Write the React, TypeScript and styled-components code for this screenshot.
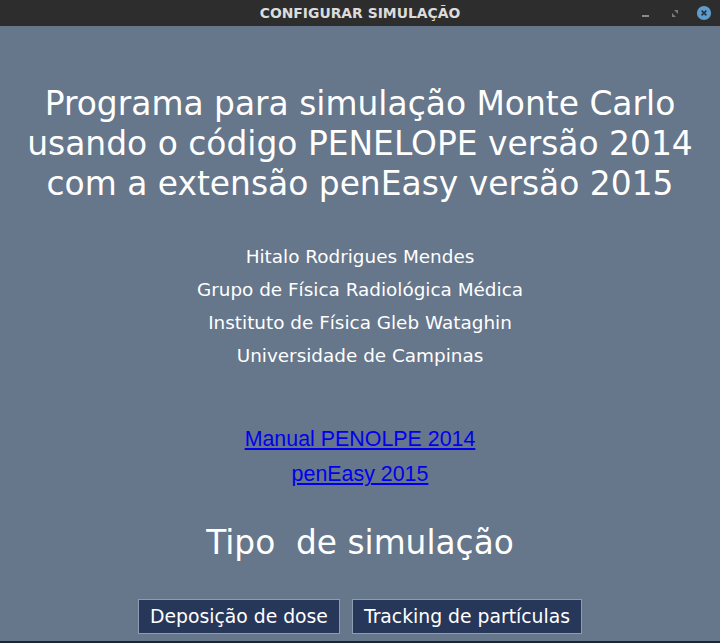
import React from "react";
import styled, { createGlobalStyle } from "styled-components";

const Global = createGlobalStyle`
  html, body { margin: 0; padding: 0; background: #66768b; }
  #root { height: 643px; }
`;

const Window = styled.div`
  width: 720px;
  height: 643px;
  display: flex;
  flex-direction: column;
  background: #66768b;
  font-family: "DejaVu Sans", sans-serif;
  color: #ffffff;
  overflow: hidden;
  border-bottom: 2px solid #1e2430;
  box-sizing: border-box;
`;

const TitleBar = styled.div`
  height: 26px;
  flex: none;
  background: #2d2d2d;
  position: relative;
  display: flex;
  align-items: center;
  justify-content: center;
`;

const TitleText = styled.span`
  font-family: "DejaVu Sans", sans-serif;
  font-weight: bold;
  font-size: 13.9px;
  color: #dcdcdc;
`;

const Controls = styled.div`
  position: absolute;
  right: 8px;
  top: 0;
  height: 26px;
  display: flex;
  align-items: center;
  gap: 13px;
`;

const Ctrl = styled.div`
  width: 16px;
  height: 16px;
  display: flex;
  align-items: center;
  justify-content: center;
`;

const Content = styled.div`
  flex: 1;
  display: flex;
  flex-direction: column;
  align-items: center;
  padding-top: 58px;
`;

const Heading = styled.h1`
  margin: 0;
  font-weight: normal;
  font-size: 32.9px;
  line-height: 40px;
  text-align: center;
`;

const Authors = styled.div`
  margin-top: 36px;
  display: flex;
  flex-direction: column;
  align-items: center;
  font-size: 18.4px;
  line-height: 33px;
`;

const Links = styled.div`
  margin-top: 50px;
  display: flex;
  flex-direction: column;
  align-items: center;
  font-family: "Liberation Sans", Arial, sans-serif;
  font-size: 21.4px;
  line-height: 35px;
`;

const Link = styled.a`
  color: #0000ee;
  text-decoration: underline;
`;

const SubHeading = styled.h2`
  margin: 31px 0 0;
  font-weight: normal;
  font-size: 32.8px;
  line-height: 40px;
  white-space: pre;
`;

const Buttons = styled.div`
  margin-top: 36px;
  display: flex;
  gap: 12px;
`;

const Button = styled.button`
  height: 35px;
  padding: 0 11px;
  background: #27375a;
  border: 1px solid #8d9cb0;
  color: #ffffff;
  font-family: "DejaVu Sans", sans-serif;
  font-size: 18.8px;
  cursor: pointer;
`;

export default function App() {
  return (
    <>
      <Global />
      <Window>
        <TitleBar>
          <TitleText>CONFIGURAR SIMULAÇÃO</TitleText>
          <Controls>
            <Ctrl>
              <svg width="16" height="16" viewBox="0 0 16 16">
                <rect x="4" y="10" width="7" height="2" fill="#8a8a8a" />
              </svg>
            </Ctrl>
            <Ctrl>
              <svg width="16" height="16" viewBox="0 0 16 16">
                <path d="M5 8 L5 12 L9 12 Z" fill="#7a7a7a" />
                <path d="M11 9 L11 5 L7 5 Z" fill="#7a7a7a" />
              </svg>
            </Ctrl>
            <Ctrl>
              <svg width="18" height="18" viewBox="0 0 18 18">
                <circle cx="9" cy="9" r="8" fill="#5e9ccc" />
                <path d="M6.3 6.3 L11.7 11.7 M11.7 6.3 L6.3 11.7" stroke="#2b3440" strokeWidth="1.8" />
              </svg>
            </Ctrl>
          </Controls>
        </TitleBar>
        <Content>
          <Heading>
            Programa para simulação Monte Carlo
            <br />
            usando o código PENELOPE versão 2014
            <br />
            com a extensão penEasy versão 2015
          </Heading>
          <Authors>
            <span>Hitalo Rodrigues Mendes</span>
            <span>Grupo de Física Radiológica Médica</span>
            <span>Instituto de Física Gleb Wataghin</span>
            <span>Universidade de Campinas</span>
          </Authors>
          <Links>
            <Link href="#">Manual PENOLPE 2014</Link>
            <Link href="#">penEasy 2015</Link>
          </Links>
          <SubHeading>Tipo  de simulação</SubHeading>
          <Buttons>
            <Button>Deposição de dose</Button>
            <Button>Tracking de partículas</Button>
          </Buttons>
        </Content>
      </Window>
    </>
  );
}
